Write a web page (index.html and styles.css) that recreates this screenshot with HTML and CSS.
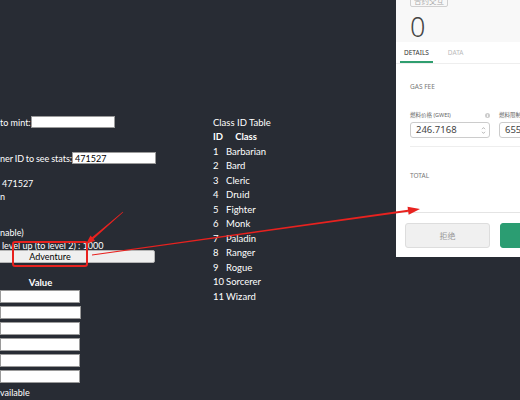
FILE: index.html
```html
<!DOCTYPE html>
<html lang="en">
<head>
    <meta charset="UTF-8">
    <meta name="viewport" content="width=device-width, initial-scale=1.0">
    <title>Summoner</title>
    <link rel="stylesheet" href="styles.css">
</head>
<body>
    <div class="page">
        <section class="summoner">
            <div class="line">to mint:<input class="field mint-field" type="text"></div>
            <div class="line stats">ner ID to see stats:<input class="field stats-field" type="text" value="471527"></div>
            <div class="line info">471527</div>
            <div class="line">n</div>
            <div class="line xp-head">nable)</div>
            <div class="line info">level up (to level 2) : 1000</div>
            <button class="adventure">Adventure</button>

            <table class="attrs">
                <tr><th>Value</th></tr>
                <tr><td><input class="field" type="text"></td></tr>
                <tr><td><input class="field wide" type="text"></td></tr>
                <tr><td><input class="field" type="text"></td></tr>
                <tr><td><input class="field" type="text"></td></tr>
                <tr><td><input class="field" type="text"></td></tr>
                <tr><td><input class="field" type="text"></td></tr>
            </table>
            <div class="line">vailable</div>
        </section>

        <section class="classes">
            <div class="line">Class ID Table</div>
            <table class="class-table">
                <tr><th>ID</th><th>Class</th></tr>
                <tr><td>1</td><td>Barbarian</td></tr>
                <tr><td>2</td><td>Bard</td></tr>
                <tr><td>3</td><td>Cleric</td></tr>
                <tr><td>4</td><td>Druid</td></tr>
                <tr><td>5</td><td>Fighter</td></tr>
                <tr><td>6</td><td>Monk</td></tr>
                <tr><td>7</td><td>Paladin</td></tr>
                <tr><td>8</td><td>Ranger</td></tr>
                <tr><td>9</td><td>Rogue</td></tr>
                <tr><td>10</td><td>Sorcerer</td></tr>
                <tr><td>11</td><td>Wizard</td></tr>
            </table>
        </section>
    </div>

    <div class="wallet">
        <div class="wallet-head">
            <span class="badge">合约交互</span>
            <div class="amount">0</div>
        </div>
        <div class="tabs">
            <span class="tab active">DETAILS</span>
            <span class="tab">DATA</span>
        </div>
        <div class="wallet-body">
            <div class="gas">
                <div class="caption">GAS FEE</div>
                <div class="gas-fields">
                    <div class="gas-col">
                        <div class="gas-label">燃料价格 (GWEI)
                            <svg class="info-dot" width="5" height="5" viewBox="0 0 10 10"><circle cx="5" cy="5" r="5" fill="#ccc"/><rect x="4.2" y="4" width="1.6" height="4" fill="#fff"/><rect x="4.2" y="2" width="1.6" height="1.4" fill="#fff"/></svg>
                        </div>
                        <div class="num-box">246.7168
                            <svg class="spin" width="5" height="9" viewBox="0 0 5 9"><path d="M1 3.2 2.5 1.6 4 3.2M1 5.8 2.5 7.4 4 5.8" fill="none" stroke="#999" stroke-width="0.7"/></svg>
                        </div>
                    </div>
                    <div class="gas-col">
                        <div class="gas-label">燃料限制</div>
                        <div class="num-box">655</div>
                    </div>
                </div>
            </div>
            <div class="caption total">TOTAL</div>
        </div>
        <div class="wallet-foot">
            <button class="btn reject">拒绝</button>
            <button class="btn confirm">确认</button>
        </div>
    </div>

    <svg class="marks" width="520" height="400" viewBox="0 0 520 400">
        <rect x="13" y="242" width="74" height="24" rx="2" fill="none" stroke="#e8221f" stroke-width="2"/>
        <polygon fill="#e8221f" points="122.8,211.8 123.2,212.2 93.5,238.9 95.1,240.7 86,244 90.5,235.5 92.1,237.3"/>
        <polygon fill="#e8221f" points="91.94,254.6 407.96,209.71 407.54,206.74 420,209 408.66,214.66 408.24,211.69 92.06,255.4"/>
    </svg>
</body>
</html>
```

FILE: styles.css
```css
body {
    margin: 0;
    background: #282c34;
    color: #fff;
    font-family: Lato, "Open Sans", sans-serif;
    font-size: 9.5px;
    overflow: hidden;
    height: 400px;
}
.page {
    display: flex;
    height: 400px;
}
.line {
    line-height: 13px;
    white-space: nowrap;
}
.summoner {
    width: 213px;
    padding-top: 116px;
    font-size: 9px;
}
.stats {
    margin-top: 23px;
    word-spacing: -0.5px;
}
.info {
    margin-top: 12px;
    padding-left: 2px;
}
.xp-head {
    margin-top: 23px;
}
.xp-head + .info {
    margin-top: 0;
}
.field {
    box-sizing: border-box;
    height: 12px;
    width: 84px;
    border: 1px solid #9a9a9a;
    background: #fff;
    padding: 0 2px;
    font: 9px Lato, sans-serif;
    color: #000;
    vertical-align: top;
    margin: 0;
}
.adventure {
    display: block;
    box-sizing: border-box;
    margin: -2px 0 0 -55px;
    width: 210px;
    height: 13px;
    padding: 0;
    border: 1px solid #b5b5b5;
    border-radius: 2px;
    background: #efefef;
    font: 9px Lato, sans-serif;
    color: #000;
}
.attrs {
    border-spacing: 0;
    margin-top: 13px;
}
.attrs th {
    line-height: 14px;
    font-size: 9.5px;
    font-weight: bold;
    padding: 0;
}
.attrs td {
    padding: 0 0 3px;
    line-height: 0;
}
.attrs .field {
    width: 80px;
    height: 13px;
}
.attrs .field.wide {
    width: 81px;
}
.classes {
    padding-top: 116px;
}
.class-table {
    border-spacing: 2px;
    margin-left: -2px;
}
.class-table th,
.class-table td {
    padding: 0;
    line-height: 12.5px;
    text-align: left;
}
.class-table th {
    font-weight: bold;
}
.class-table th + th {
    text-align: center;
}

.wallet {
    position: absolute;
    left: 396px;
    top: 0;
    width: 210px;
    height: 257px;
    background: #fff;
    color: #333;
    font-family: "Noto Sans", "Noto Sans CJK SC", sans-serif;
}
.wallet-head {
    display: flow-root;
    background: #f8f8f8;
    height: 42px;
    padding: 0 14px;
}
.badge {
    display: block;
    width: fit-content;
    margin-top: -5px;
    border: 1px solid #cfcfcf;
    border-radius: 2px;
    padding: 0 3px;
    font-size: 7.5px;
    line-height: 10px;
    color: #aaa;
}
.amount {
    margin-top: 5px;
    font-size: 27px;
    font-weight: 300;
    line-height: 30px;
    color: #444;
}
.tabs {
    display: flex;
    height: 20px;
    padding: 1px 0 0 4px;
    border-bottom: 1px solid #eee;
}
.tab {
    padding: 0 4px;
    font-size: 6.5px;
    line-height: 20px;
    color: #bbb;
}
.tab.active {
    color: #333;
    border-bottom: 2px solid #2f9e6f;
    height: 18px;
}
.tab + .tab {
    margin-left: 11px;
}
.wallet-body {
    padding: 0 0 0 14px;
    border-bottom: 1px solid #e4e4e4;
    height: 148px;
}
.caption {
    font-size: 6.5px;
    line-height: 12px;
    color: #777;
}
.gas {
    padding-top: 17px;
    padding-bottom: 8px;
    border-bottom: 1px solid #eee;
}
.gas-fields {
    display: flex;
    gap: 9px;
    margin-top: 17px;
}
.gas-col {
    width: 80px;
    flex: none;
}
.gas-label {
    font-size: 5.5px;
    line-height: 10px;
    color: #666;
    position: relative;
    white-space: nowrap;
}
.info-dot {
    position: absolute;
    right: 0;
    top: 2.5px;
}
.num-box {
    position: relative;
    box-sizing: border-box;
    height: 16px;
    margin-top: 2px;
    border: 1px solid #ccc;
    border-radius: 3px;
    padding-left: 5px;
    font-size: 9.5px;
    line-height: 14px;
    color: #444;
}
.spin {
    position: absolute;
    right: 3px;
    top: 2.5px;
}
.total {
    margin-top: 23px;
}
.wallet-foot {
    display: flex;
    gap: 10px;
    padding: 10px 0 0 9px;
}
.btn {
    height: 25px;
    border-radius: 3px;
    font-family: "Noto Sans CJK SC", sans-serif;
    font-size: 8px;
    flex: none;
}
.reject {
    width: 85px;
    background: #f0f0f0;
    border: 1px solid #ddd;
    color: #999;
}
.confirm {
    width: 85px;
    background: #2b9d72;
    border: 1px solid #2b9d72;
    color: #fff;
}
.marks {
    position: absolute;
    left: 0;
    top: 0;
    pointer-events: none;
}
```
